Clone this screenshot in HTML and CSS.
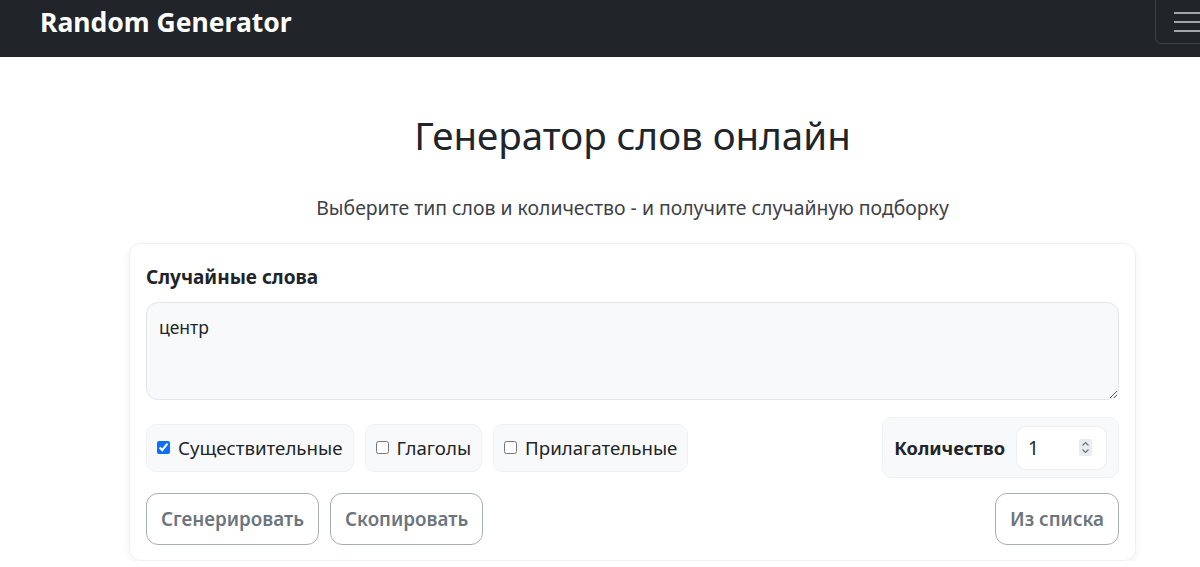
FILE: index.html
```html
<!DOCTYPE html>
<html lang="ru">

<head>
    <meta charset="UTF-8">
    <meta name="viewport" content="width=device-width, initial-scale=1.0">
    <title>Генератор слов онлайн</title>
    <link rel="stylesheet" href="styles.css">
</head>

<body>
    <nav class="navbar">
        <a class="brand" href="#">Random Generator</a>
        <button class="toggler" aria-label="Меню">
            <span class="bar"></span>
            <span class="bar"></span>
            <span class="bar"></span>
        </button>
    </nav>

    <main class="main">
        <h1 class="title">Генератор слов онлайн</h1>
        <p class="lead">Выберите тип слов и количество - и получите случайную подборку</p>

        <div class="card">
            <h2 class="card-title">Случайные слова</h2>
            <textarea class="output" readonly>центр</textarea>

            <div class="options">
                <div class="types">
                    <label class="check"><input type="checkbox" checked> Существительные</label>
                    <label class="check"><input type="checkbox"> Глаголы</label>
                    <label class="check"><input type="checkbox"> Прилагательные</label>
                </div>
                <div class="count">
                    <span class="count-label">Количество</span>
                    <div class="count-input">
                        <span>1</span>
                        <svg class="spin" width="13" height="17" viewBox="0 0 13 17">
                            <rect x="0" y="0" width="13" height="17" rx="2" fill="#e9ecef"/>
                            <path d="M3.5 6.5 L6.5 3.5 L9.5 6.5" fill="none" stroke="#6c757d" stroke-width="1.2"/>
                            <path d="M3.5 10.5 L6.5 13.5 L9.5 10.5" fill="none" stroke="#6c757d" stroke-width="1.2"/>
                        </svg>
                    </div>
                </div>
            </div>

            <div class="actions">
                <div class="actions-left">
                    <button class="btn">Сгенерировать</button>
                    <button class="btn">Скопировать</button>
                </div>
                <button class="btn">Из списка</button>
            </div>
        </div>
    </main>
</body>

</html>
```

FILE: styles.css
```css
body {
    font-family: 'Noto Sans', 'Open Sans', sans-serif;
    margin: 0;
    background: #ffffff;
    color: #212529;
}

.navbar {
    background: #212529;
    height: 57px;
    display: flex;
    justify-content: space-between;
    align-items: flex-start;
    padding-left: 40px;
    overflow: hidden;
}

.brand {
    color: #ffffff;
    text-decoration: none;
    font-weight: 700;
    font-size: 26.5px;
    line-height: 44px;
}

.toggler {
    width: 60px;
    height: 45px;
    margin-right: -15px;
    margin-top: -1px;
    background: transparent;
    border: 1px solid #3c4146;
    border-radius: 0 0 0 6px;
    display: flex;
    flex-direction: column;
    justify-content: center;
    gap: 7px;
    padding: 0 0 0 18px;
}

.toggler .bar {
    display: block;
    width: 30px;
    height: 2px;
    background: #a3a6a9;
}

.main {
    width: 1007px;
    margin-left: 129px;
}

.title {
    text-align: center;
    font-weight: 400;
    font-size: 38.5px;
    margin: 0;
    padding-top: 52px;
    line-height: 52px;
}

.lead {
    text-align: center;
    font-size: 19.4px;
    color: #3d4247;
    margin: 34px 0 22px;
    line-height: 26px;
}

.card {
    border: 1px solid #eef0f2;
    border-radius: 12px;
    box-shadow: 0 3px 8px rgba(0, 0, 0, 0.06);
    padding: 20px 16px 15px;
}

.card-title {
    font-size: 19px;
    font-weight: 700;
    margin: 0 0 12px;
    line-height: 26px;
}

.output {
    display: block;
    box-sizing: border-box;
    width: 100%;
    height: 98px;
    background: #f8f9fa;
    border: 1px solid #e3e5e8;
    border-radius: 12px;
    font-family: inherit;
    font-size: 17.5px;
    color: #212529;
    padding: 12px 12px;
    resize: vertical;
}

.options {
    display: flex;
    justify-content: space-between;
    align-items: center;
    margin-top: 17px;
}

.types {
    display: flex;
    gap: 11px;
}

.check {
    display: flex;
    align-items: center;
    gap: 8px;
    box-sizing: border-box;
    height: 48px;
    padding: 0 10px 0 10px;
    background: #f8f9fa;
    border: 1px solid #eff1f3;
    border-radius: 10px;
    font-size: 18.7px;
}

.check input {
    margin: 0;
    width: 13px;
    height: 13px;
    accent-color: #0d6efd;
}

.count {
    display: flex;
    align-items: center;
    gap: 11px;
    box-sizing: border-box;
    height: 61px;
    padding: 0 11px 0 11px;
    background: #f8f9fa;
    border: 1px solid #eff1f3;
    border-radius: 10px;
}

.count-label {
    font-weight: 700;
    font-size: 18.3px;
}

.count-input {
    display: flex;
    align-items: center;
    justify-content: space-between;
    box-sizing: border-box;
    width: 91px;
    height: 44px;
    background: #ffffff;
    border: 1px solid #eceef0;
    border-radius: 10px;
    padding: 0 14px 0 11px;
    font-size: 19px;
}

.actions {
    display: flex;
    justify-content: space-between;
    margin-top: 15px;
}

.actions-left {
    display: flex;
    gap: 11px;
}

.btn {
    height: 52px;
    padding: 0 14px;
    background: #ffffff;
    border: 1px solid #a9aeb3;
    border-radius: 12px;
    font-family: inherit;
    font-size: 18.8px;
    font-weight: 600;
    color: #6c757d;
}
```
